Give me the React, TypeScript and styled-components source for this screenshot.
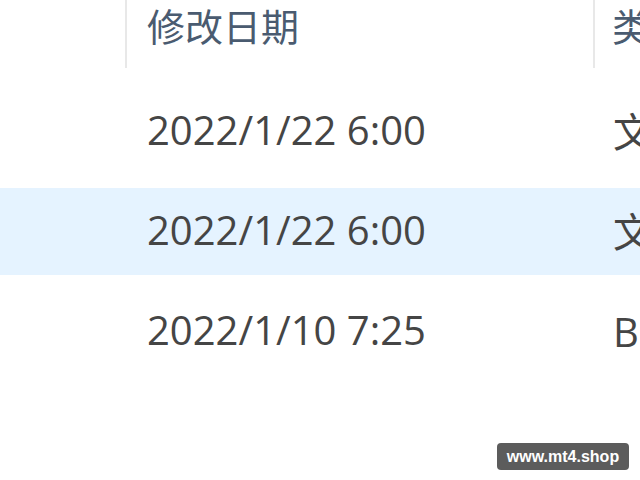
import React from 'react'
import styled, { createGlobalStyle } from 'styled-components'

const GlobalStyle = createGlobalStyle`
  html, body {
    margin: 0;
    padding: 0;
    background: #ffffff;
  }
  body {
    width: 640px;
    height: 480px;
    overflow: hidden;
    font-family: 'Open Sans', 'Noto Sans CJK SC', sans-serif;
  }
`

const Page = styled.div`
  position: relative;
  width: 640px;
  height: 480px;
  overflow: hidden;
  background: #ffffff;
`

const Grid = styled.div`
  display: grid;
  grid-template-columns: 125px 468px 47px;
  width: 640px;
`

const HeaderCell = styled.div<{ $divider?: boolean; $pad?: number }>`
  height: 68px;
  box-sizing: border-box;
  padding-left: ${({ $pad }) => $pad ?? 20}px;
  border-left: ${({ $divider }) => ($divider ? '2px solid #e8e8e8' : 'none')};
  font-family: 'Noto Sans CJK SC', 'Noto Sans', sans-serif;
  font-size: 38px;
  line-height: 50px;
  color: #4a5b70;
  white-space: nowrap;
  overflow: hidden;
`

const Rows = styled.div`
  display: flex;
  flex-direction: column;
  gap: 13px;
  padding-top: 20px;
`

const Row = styled.div<{ $selected?: boolean }>`
  display: grid;
  grid-template-columns: 125px 468px 47px;
  width: 640px;
  height: 87px;
  align-items: center;
  background: ${({ $selected }) => ($selected ? '#e5f3ff' : 'transparent')};
`

const Cell = styled.div<{ $pad?: number }>`
  padding-left: ${({ $pad }) => $pad ?? 22}px;
  padding-bottom: 4px;
  font-family: 'Open Sans', 'Noto Sans CJK SC', sans-serif;
  font-size: 40px;
  color: #454545;
  white-space: nowrap;
  overflow: hidden;
`

const Watermark = styled.div`
  position: absolute;
  left: 497px;
  top: 443px;
  width: 132px;
  height: 27px;
  border-radius: 4px;
  background: #5c5c5c;
  color: #ffffff;
  font-family: 'Liberation Sans', Arial, sans-serif;
  font-weight: bold;
  font-size: 16px;
  line-height: 27px;
  text-align: center;
`

const rows = [
  { date: '2022/1/22 6:00', type: '文件夹', selected: false },
  { date: '2022/1/22 6:00', type: '文件夹', selected: true },
  { date: '2022/1/10 7:25', type: 'BIN 文件', selected: false },
]

export default function App() {
  return (
    <Page>
      <GlobalStyle />
      <Grid>
        <HeaderCell />
        <HeaderCell $divider $pad={20}>修改日期</HeaderCell>
        <HeaderCell $divider $pad={17}>类型</HeaderCell>
      </Grid>
      <Rows>
        {rows.map((r, i) => (
          <Row key={i} $selected={r.selected}>
            <Cell />
            <Cell>{r.date}</Cell>
            <Cell $pad={20}>{r.type}</Cell>
          </Row>
        ))}
      </Rows>
      <Watermark>www.mt4.shop</Watermark>
    </Page>
  )
}
